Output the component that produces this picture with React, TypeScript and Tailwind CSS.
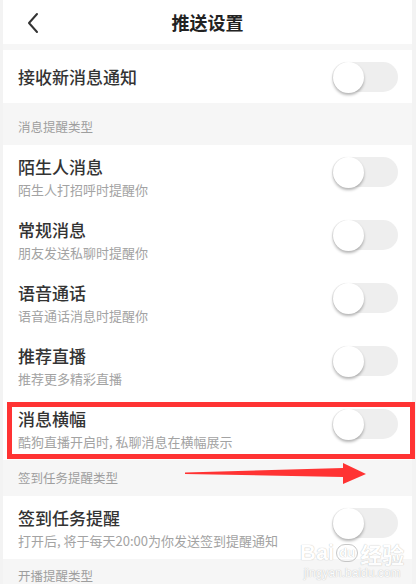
import React from "react";

const font = "font-['Noto_Sans_CJK_SC','Noto_Sans',sans-serif]";

function Toggle() {
  return (
    <div className="relative h-[30px] w-[66px] rounded-full bg-[#eeeeee]">
      <div className="absolute left-[1px] top-0 h-[31px] w-[31px] rounded-full bg-white shadow-[0_2px_3px_rgba(0,0,0,0.3)]" />
    </div>
  );
}

function Row({ title, sub }: { title: string; sub: string }) {
  return (
    <div className="flex h-[63px] shrink-0 items-start justify-between bg-white pl-[15px] pr-[14px]">
      <div className="flex flex-col pt-[11px]">
        <div className="text-[17px] font-medium leading-[22px] text-[#333333]">{title}</div>
        <div className="mt-[3px] text-[13px] leading-[18px] text-[#a3a3a3]">{sub}</div>
      </div>
      <div className="mt-[12px]">
        <Toggle />
      </div>
    </div>
  );
}

function Section({ text, cls }: { text: string; cls: string }) {
  return (
    <div className={`shrink-0 bg-[#f6f6f6] pl-[15px] text-[12.5px] leading-[18px] text-[#9e9e9e] ${cls}`}>{text}</div>
  );
}

export default function App() {
  return (
    <div className={`relative h-[584px] w-[416px] overflow-hidden bg-[#f3f3f3] pl-[3px] pr-[4px] ${font}`}>
      <div className="flex h-full flex-col bg-[#f6f6f6]">
        {/* header */}
        <div className="relative flex h-[44px] shrink-0 items-center justify-center bg-white">
          <svg className="absolute left-[23px] top-[12px]" width="14" height="22" viewBox="0 0 14 22">
            <polyline points="11,2 3,11 11,20" fill="none" stroke="#333" strokeWidth="2" strokeLinecap="round" strokeLinejoin="round" />
          </svg>
          <div className="text-[18px] font-bold text-[#222222]">推送设置</div>
        </div>
        <div className="h-[6px] shrink-0" />
        {/* main switch */}
        <div className="flex h-[53px] shrink-0 items-center justify-between bg-white pl-[15px] pr-[14px]">
          <div className="text-[17px] font-medium text-[#333333]">接收新消息通知</div>
          <Toggle />
        </div>
        <Section text="消息提醒类型" cls="h-[42px] pt-[15px]" />
        <Row title="陌生人消息" sub="陌生人打招呼时提醒你" />
        <Row title="常规消息" sub="朋友发送私聊时提醒你" />
        <Row title="语音通话" sub="语音通话消息时提醒你" />
        <Row title="推荐直播" sub="推荐更多精彩直播" />
        <Row title="消息横幅" sub="酷狗直播开启时, 私聊消息在横幅展示" />
        <Section text="签到任务提醒类型" cls="h-[36px] pt-[9px]" />
        <Row title="签到任务提醒" sub="打开后, 将于每天20:00为你发送签到提醒通知" />
        <Section text="开播提醒类型" cls="h-[40px] pt-[8px]" />
      </div>

      {/* red annotation box */}
      <div className="absolute left-[7px] top-[402px] h-[57px] w-[408px] border-[5px] border-[#ff3333]" />
      {/* red arrow */}
      <svg className="absolute left-[183px] top-[460px]" width="190" height="28" viewBox="0 0 190 28">
        <polygon points="2,12.5 160,8 160,3 183,14 160,24 160,17 2,14" fill="#ff3333" />
      </svg>

      {/* watermark */}
      <div className="absolute left-[300px] top-[540px] flex flex-col items-center font-['Liberation_Sans',sans-serif] text-white opacity-80 [text-shadow:0_0_1px_#9a9a9a]">
        <div className="flex items-center text-[22px] font-bold leading-[26px]">
          <span>Bai</span>
          <span className="mx-[2px] rounded-full border border-[#bbbbbb] px-[2px] text-[13px] leading-[16px]">du</span>
          <span className="font-['Noto_Sans_CJK_SC',sans-serif]">经验</span>
        </div>
        <div className="text-[12px] leading-[14px]">jingyan.baidu.com</div>
      </div>
    </div>
  );
}
